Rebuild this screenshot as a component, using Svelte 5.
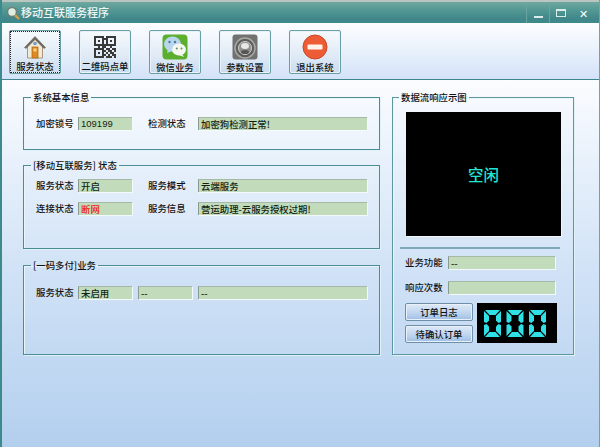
<script>
  const tools = [
    { id: 'home', label: '服务状态', active: true },
    { id: 'qr', label: '二维码点单' },
    { id: 'wechat', label: '微信业务' },
    { id: 'gear', label: '参数设置' },
    { id: 'exit', label: '退出系统' }
  ];
  const qrCells = [
    [1,1,1,1,1,0,1,1,1,1,1],[1,0,0,0,1,1,1,0,0,0,1],[1,0,1,0,1,0,1,0,1,0,1],[1,0,0,0,1,0,1,0,0,0,1],[1,1,1,1,1,1,1,1,1,1,1],
    [0,0,1,0,1,1,0,0,1,0,0],
    [1,1,1,1,1,0,1,1,0,1,1],[1,0,0,0,1,1,0,1,1,0,1],[1,0,1,0,1,0,1,0,1,1,0],[1,0,0,0,1,1,0,1,0,1,1],[1,1,1,1,1,0,1,1,1,0,1]
  ];
  const segments = [
    '1,0 16,0 11.500,5 5.500,5','0,1 5,6 5,10.500 2.500,13 0,12','17,1 17,12 14.500,13 12,10.500 12,6',
    '0,15 2.500,14 5,16.500 5,21 0,26','17,15 17,26 12,21 12,16.500 14.500,14','5.500,22 11.500,22 16,27 1,27'
  ];
</script>

<div class="window">
  <div class="sliver"></div>
  <header class="titlebar">
    <svg class="appicon" viewBox="0 0 16 16" width="16" height="16">
      <circle cx="7" cy="7" r="4.500" fill="#dfeee0" stroke="#6d7f78" stroke-width="1.600"/>
      <path d="M10 10l4 4" stroke="#d8a040" stroke-width="2.400"/>
    </svg>
    <span class="apptitle">移动互联服务程序</span>
    <div class="winbtns">
      <span class="winbtn"><i class="min"></i></span>
      <span class="winbtn"><i class="max"></i></span>
      <span class="winbtn close">✕</span>
    </div>
  </header>

  <nav class="toolbar">
    {#each tools as t}
      <button class="tool" class:active={t.active}>
        <span class="ticon">
          {#if t.id === 'home'}
            <svg viewBox="0 0 24 24" width="24" height="24">
              <path d="M4.500 11v12h15V11L12 3.500z" fill="#f2ead4" stroke="#a89878"/>
              <path d="M1.500 12.500L12 1.500l10.500 11-1.500 1L12 4.500 3 13.500z" fill="#6f6a60" stroke="#5c574e" stroke-width=".5"/>
              <circle cx="12" cy="8.500" r="1.800" fill="#6a9ccf"/>
              <rect x="9" y="12" width="6" height="11" fill="#e08a1e" stroke="#a8601a" stroke-width=".7"/>
              <rect x="10.500" y="13.500" width="3" height="3" fill="#f8d890"/>
            </svg>
          {:else if t.id === 'qr'}
            <svg viewBox="0 0 22 22" width="22" height="22" shape-rendering="crispEdges">
              {#each qrCells as row, y}
                {#each row as c, x}
                  {#if c}<rect x={x * 2} y={y * 2} width="2" height="2" fill="#3a3a3a"/>{/if}
                {/each}
              {/each}
            </svg>
          {:else if t.id === 'wechat'}
            <svg viewBox="0 0 26 26" width="26" height="26">
              <rect x="0.500" y="0.500" width="25" height="25" rx="4" fill="#5cae2e"/>
              <ellipse cx="10.500" cy="10" rx="8.500" ry="7.500" fill="#b9d6ee"/>
              <path d="M6 15l-1 4 5-2z" fill="#b9d6ee"/>
              <circle cx="7.500" cy="8" r="1.200" fill="#4f7a9a"/><circle cx="13" cy="8" r="1.200" fill="#4f7a9a"/>
              <ellipse cx="17" cy="15.500" rx="7" ry="6" fill="#f4f8f0"/>
              <path d="M20 20l2 3-5-2z" fill="#f4f8f0"/>
              <circle cx="14.800" cy="14.500" r="1" fill="#6b8a6b"/><circle cx="19.500" cy="14.500" r="1" fill="#6b8a6b"/>
            </svg>
          {:else if t.id === 'gear'}
            <svg viewBox="0 0 26 26" width="26" height="26">
              <rect x="0.500" y="0.500" width="25" height="25" rx="3" fill="#717170"/>
              <circle cx="13" cy="14" r="10" fill="#5f5f5e" stroke="#a8a8a4" stroke-width="1.500"/>
              <circle cx="13" cy="14" r="6.500" fill="#8e8e8c" stroke="#d0d0cc"/>
              <ellipse cx="13" cy="12" rx="4" ry="3" fill="#e8e8e4"/>
              <ellipse cx="13" cy="18" rx="4" ry="2" fill="#565654"/>
            </svg>
          {:else}
            <svg viewBox="0 0 26 26" width="26" height="26">
              <circle cx="13" cy="13" r="12" fill="#ee5c36" stroke="#c8482a"/>
              <rect x="5.500" y="10.500" width="15" height="5" rx="1" fill="#fff3ec"/>
            </svg>
          {/if}
        </span>
        <span class="tlabel">{t.label}</span>
      </button>
    {/each}
  </nav>

  <main class="content">
    <div class="left">
      <fieldset class="group g1">
        <legend>系统基本信息</legend>
        <div class="row">
          <span class="lab">加密锁号</span><span class="field f-s num">109199</span>
          <span class="lab second">检测状态</span><span class="field f-l">加密狗检测正常!</span>
        </div>
      </fieldset>
      <fieldset class="group g2">
        <legend>[移动互联服务] 状态</legend>
        <div class="row">
          <span class="lab">服务状态</span><span class="field f-s">开启</span>
          <span class="lab second">服务模式</span><span class="field f-l">云端服务</span>
        </div>
        <div class="row">
          <span class="lab">连接状态</span><span class="field f-s red">断网</span>
          <span class="lab second">服务信息</span><span class="field f-l">营运助理-云服务授权过期!</span>
        </div>
      </fieldset>
      <fieldset class="group g3">
        <legend>[一码多付]业务</legend>
        <div class="row">
          <span class="lab">服务状态</span><span class="field f-s">未启用</span>
          <span class="field f-m">--</span><span class="field f-l">--</span>
        </div>
      </fieldset>
    </div>

    <fieldset class="group right">
      <legend>数据流响应示图</legend>
      <div class="screen">空闲</div>
      <div class="rule"></div>
      <div class="rrow"><span class="rlab">业务功能</span><span class="field f-r">--</span></div>
      <div class="rrow"><span class="rlab">响应次数</span><span class="field f-r"></span></div>
      <div class="bottom">
        <div class="btns">
          <button class="act">订单日志</button>
          <button class="act">待确认订单</button>
        </div>
        <svg class="led" viewBox="0 0 80 40" width="80" height="40" role="img" aria-label="000">
          <rect width="80" height="40" fill="#000"/>
          {#each [7, 29.5, 52] as x}
            <g transform="translate({x} 7)">
              {#each segments as s}<polygon points={s} fill="#2fe0e6"/>{/each}
            </g>
          {/each}
        </svg>
      </div>
    </fieldset>
  </main>
</div>

<style>
  :global(body) { margin: 0; }
  .window {
    width: 600px; height: 447px; overflow: hidden; box-sizing: border-box;
    display: flex; flex-direction: column;
    font: 500 9.400px "Noto Sans CJK SC", "Liberation Sans", sans-serif; color: #111;
    background: linear-gradient(#fbfcff 80px, #e8f1fb 160px, #cfe1f6 280px, #b3cfee 447px);
    border-left: 2px solid #3d8a8c; border-right: 1px solid #6aa5a8;
  }
  .sliver { height: 2px; background: #b9c5bf; margin-left: -2px; }
  .titlebar {
    height: 21px; display: flex; align-items: center; padding-left: 4px; margin-left: -2px;
    background: linear-gradient(#6ea7a0, #4f9692 45%, #41868a 80%, #3d8b8c);
    color: #eef6f4; flex: none;
  }
  .appicon { margin-left: 1px; margin-right: 0; }
  .apptitle { font-size: 11px; line-height: 21px; }
  .winbtns { margin-left: auto; display: flex; align-self: stretch; }
  .winbtn {
    width: 23px; display: flex; align-items: center; justify-content: center;
    border-left: 1px solid #68a5a0; color: #fff; box-sizing: border-box;
  }
  .winbtn .min { width: 9px; height: 2px; background: #dcecea; margin-top: 8px; }
  .winbtn .max { width: 8px; height: 5px; border: 1.500px solid #dcecea; border-top-width: 2px; }
  .winbtn.close { border-left: 0; font-size: 11px; width: 27px; padding-right: 4px; }
  .toolbar {
    height: 57px; flex: none; box-sizing: border-box; display: flex; gap: 18px; padding: 7px 0 0 7px;
    background: linear-gradient(#fdfdff, #edf4fc 40%, #d3e2f8);
    border-bottom: 1px solid #3f868c;
  }
  .tool {
    width: 52px; height: 44px; padding: 3px 0 0; box-sizing: border-box; font: inherit; color: #111;
    display: flex; flex-direction: column; align-items: center; justify-content: flex-start;
    background: linear-gradient(#f6fafd, #dfeaf6 60%, #c9dcee);
    border: 1px solid #6a9fa6; border-radius: 2px;
    box-shadow: 0 0 0 1px #e8f2f8 inset;
  }
  .tool.active { outline: 1px dotted #222; outline-offset: -2px; }
  .ticon { height: 26px; display: flex; align-items: center; justify-content: center; }
  .tlabel { font-size: 9.400px; line-height: 13px; white-space: nowrap; margin-top: 1px; }
  .content { flex: 1; display: flex; gap: 12px; padding: 11px 0 0 21px; align-items: flex-start; }
  .left { width: 357px; display: flex; flex-direction: column; gap: 9px; }
  .group {
    margin: 0; box-sizing: border-box; border: 1px solid #4c8c96; padding: 0 0 0 12px; min-width: 0;
    box-shadow: 1px 1px 0 #dff2f8, inset 1px 1px 0 #e8f6fa;
  }
  legend { padding: 0 2px; margin-left: -5px; font-size: 9.400px; line-height: 12px; color: #111; white-space: nowrap; }
  .g1 { height: 59px; }
  .g2 { height: 90px; }
  .g3 { height: 96px; margin-top: 1px; }
  .g1 .row { margin-top: 14px; }
  .g2 .row { margin-top: 8px; }
  .g2 .row + .row { margin-top: 10px; }
  .g3 .row { margin-top: 15px; }
  .row { display: flex; align-items: center; height: 13px; }
  .lab { width: 42px; white-space: nowrap; line-height: 12px; margin-top: -1px; }
  .second { margin-left: 16px; width: 50px; }
  .field {
    display: block; height: 13px; line-height: 12px; box-sizing: border-box; padding-left: 2px;
    background: #c2dbbb; color: #141f10; white-space: nowrap;
    border-left: 1px solid #8a9a8e; border-top: 1px solid #a8b8a8;
    box-shadow: 1px 1px 0 #f4fafc;
  }
  .f-s { width: 54px; }
  .f-m { width: 54px; margin-left: 6px; }
  .f-l { width: 169px; }
  .g3 .f-l { margin-left: 6px; }
  .num { font: 9.500px/12px "Liberation Sans", sans-serif; }
  .red { color: #f01818; }
  .right { width: 182px; height: 264px; padding-left: 13px; border-color: #5d98a0; }
  .right legend { margin-left: -7px; }
  .screen {
    width: 155px; height: 124px; margin-top: 9px; background: #000; color: #22e6d4;
    display: flex; align-items: center; justify-content: center; font-size: 15.500px; font-weight: 500;
    box-shadow: 1px 1px 0 #f0f6fa;
  }
  .rule { width: 160px; height: 2px; margin: 11px 0 7px -6px; background: #7ea9b8; }
  .rrow { display: flex; align-items: center; height: 13px; margin-bottom: 12px; margin-left: -1px; }
  .rlab { width: 43px; margin-top: -1px; white-space: nowrap; }
  .f-r { width: 107px; }
  .bottom { display: flex; gap: 4px; margin-top: -3px; margin-left: -1px; }
  .btns { display: flex; flex-direction: column; gap: 4px; }
  .act {
    width: 68px; height: 18px; padding: 0; font: 500 9.400px "Noto Sans CJK SC", sans-serif; color: #111;
    background: linear-gradient(#dfeaf8, #bcd3ee 60%, #9dbde6);
    border: 1px solid #6f8fa8; border-radius: 2px; box-shadow: inset 0 0 0 1px #e8f0f8;
  }
  .led { display: block; }
</style>
